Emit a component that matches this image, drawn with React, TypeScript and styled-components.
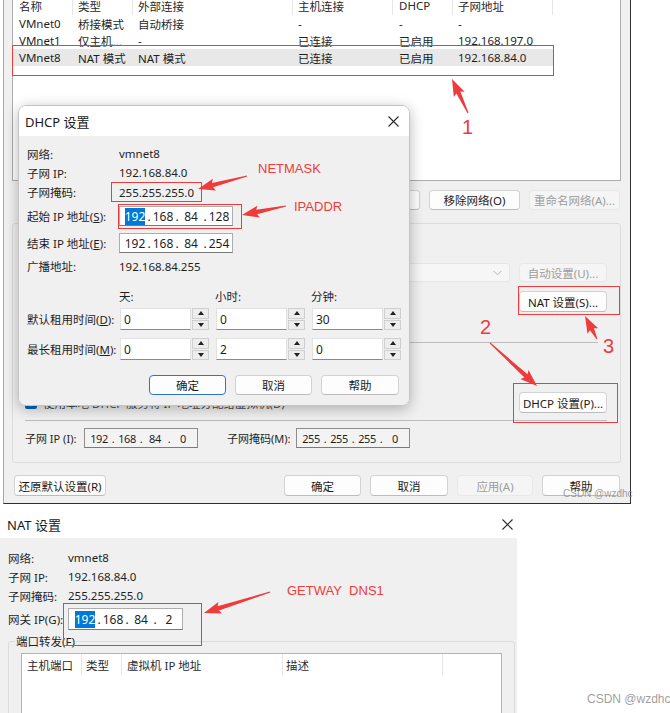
import React from "react";
import styled, { createGlobalStyle } from "styled-components";

const UI_FONT = `"Noto Sans", "Noto Sans CJK SC", sans-serif`;
const RED = "#ee3b3b";

const GlobalStyle = createGlobalStyle`
  * { box-sizing: border-box; }
  html, body { margin: 0; padding: 0; background: #fff; }
  body { font-family: ${UI_FONT}; font-size: 11.5px; color: #1f1f1f; }
`;

const Page = styled.div`
  position: relative;
  width: 670px;
  height: 713px;
  overflow: hidden;
  background: #fff;
`;

/* ---------- shared controls ---------- */

const Btn = styled.button<{ $w: number; $disabled?: boolean; $default?: boolean }>`
  flex: none;
  width: ${(p) => p.$w}px;
  height: 100%;
  padding: 0;
  display: flex;
  align-items: center;
  justify-content: center;
  font: inherit;
  background: ${(p) => (p.$disabled ? "#f5f5f5" : "#fdfdfd")};
  border: 1px solid ${(p) => (p.$default ? "#2f74c9" : p.$disabled ? "#e8e8e8" : "#d3d3d3")};
  border-bottom-color: ${(p) => (p.$default ? "#2f74c9" : p.$disabled ? "#e8e8e8" : "#bcbcbc")};
  border-radius: 4px;
  color: ${(p) => (p.$disabled ? "#9d9d9d" : "#1b1b1b")};
  white-space: nowrap;
`;

const IpBox = styled.div<{ $w: number; $pad: number; $muted?: boolean }>`
  flex: none;
  display: flex;
  align-items: center;
  width: ${(p) => p.$w}px;
  height: 100%;
  padding-left: ${(p) => p.$pad}px;
  background: ${(p) => (p.$muted ? "#f3f3f3" : "#fff")};
  border: 1px solid ${(p) => (p.$muted ? "#8c8c8c" : "#adadad")};
  border-bottom-color: #7a7a7a;
  font-size: ${(p) => (p.$muted ? "11px" : "12px")};
  letter-spacing: ${(p) => (p.$muted ? "-0.4px" : "0")};
`;

const IpPart = styled.span`
  width: 22px;
  text-align: center;
`;

const IpDot = styled.span`
  width: 6px;
  text-align: center;
`;

const Sel = styled.span`
  background: #0078d7;
  color: #fff;
`;

const IpField = ({ parts, w, pad, muted, selFirst }: { parts: string[]; w: number; pad: number; muted?: boolean; selFirst?: boolean }) => (
  <IpBox $w={w} $pad={pad} $muted={muted}>
    {parts.map((p, i) => (
      <React.Fragment key={i}>
        {i > 0 && <IpDot>.</IpDot>}
        <IpPart>{i === 0 && selFirst ? <Sel>{p}</Sel> : p}</IpPart>
      </React.Fragment>
    ))}
  </IpBox>
);

const CloseIcon = () => (
  <svg width="11" height="11" viewBox="0 0 11 11">
    <path d="M0.5 0.5 L10.5 10.5 M10.5 0.5 L0.5 10.5" stroke="#2b2b2b" strokeWidth="1.1" />
  </svg>
);

/* ---------- top: virtual network editor ---------- */

const EditorWindow = styled.div`
  position: relative;
  display: flex;
  flex-direction: column;
  width: 628px;
  height: 504px;
  margin-left: 3px;
  padding: 0 9px 0 8px;
  background: #f0f0f0;
  border-left: 1px solid #a8a8a8;
  border-right: 1px solid #303030;
  border-bottom: 1px solid #303030;
`;

const NetList = styled.div`
  flex: none;
  margin-top: -4px;
  height: 185px;
  background: #fff;
  border: 1px solid #acacac;
  border-top: none;
`;

const ListHead = styled.div<{ $h: number }>`
  display: flex;
  height: ${(p) => p.$h}px;
  color: #2a2a2a;
`;

const HeadCell = styled.div<{ $w: number; $pl: number }>`
  flex: none;
  display: flex;
  align-items: center;
  width: ${(p) => p.$w}px;
  padding-left: ${(p) => p.$pl}px;
  border-right: 1px solid #e6e6e6;
  white-space: nowrap;
`;

const ListRow = styled.div<{ $selected?: boolean }>`
  display: flex;
  width: 540px;
  height: 17px;
  align-items: center;
  background: ${(p) => (p.$selected ? "#e8e8e8" : "transparent")};
`;

const Cell = styled.div<{ $w: number; $pl: number }>`
  flex: none;
  width: ${(p) => p.$w}px;
  padding-left: ${(p) => p.$pl}px;
  white-space: nowrap;
  overflow: hidden;
`;

const ButtonRow = styled.div<{ $mt: number; $h: number; $pl?: number; $pr?: number }>`
  flex: none;
  display: flex;
  align-items: center;
  gap: 9px;
  height: ${(p) => p.$h}px;
  margin-top: ${(p) => p.$mt}px;
  padding: 0 ${(p) => p.$pr ?? 0}px 0 ${(p) => p.$pl ?? 0}px;
`;

const Spacer = styled.div`
  flex: 1;
`;

const InfoGroup = styled.div`
  flex: none;
  display: flex;
  flex-direction: column;
  height: 240px;
  margin-top: 13px;
  padding: 0 13px 0 12px;
  border: 1px solid #dcdcdc;
  border-radius: 3px;
`;

const GroupRow = styled.div<{ $mt: number; $h: number }>`
  flex: none;
  display: flex;
  align-items: center;
  height: ${(p) => p.$h}px;
  margin-top: ${(p) => p.$mt}px;
`;

const Rule = styled.div<{ $mt: number; $mr: number }>`
  flex: none;
  height: 1px;
  margin-top: ${(p) => p.$mt}px;
  margin-right: ${(p) => p.$mr}px;
  background: #bdbdbd;
`;

const Combo = styled.div`
  flex: 1;
  height: 100%;
  margin: 0 9px 0 8px;
  display: flex;
  align-items: center;
  justify-content: flex-end;
  padding-right: 7px;
  background: #f6f6f6;
  border: 1px solid #e6e6e6;
  border-radius: 3px;
`;

const Check = styled.span`
  flex: none;
  width: 12px;
  height: 12px;
  margin-right: 6px;
  border-radius: 2px;
  background: #0067c0;
  display: flex;
  align-items: center;
  justify-content: center;
`;

const MutedText = styled.span`
  color: #4a4a4a;
  white-space: nowrap;
`;

const RowLabel = styled.span<{ $w: number; $ml?: number }>`
  flex: none;
  width: ${(p) => p.$w}px;
  margin-left: ${(p) => p.$ml ?? 0}px;
  white-space: nowrap;
  font-size: 11px;
`;

const Watermark = styled.span<{ $size: number }>`
  position: absolute;
  font-family: "Liberation Sans", sans-serif;
  font-size: ${(p) => p.$size}px;
  color: rgba(140, 140, 140, 0.85);
  white-space: nowrap;
  line-height: 1;
`;

const cols = [
  { w: 60, pl: 6 },
  { w: 60, pl: 5 },
  { w: 160, pl: 5 },
  { w: 100, pl: 5 },
  { w: 60, pl: 6 },
  { w: 100, pl: 5 },
];

const heads = ["名称", "类型", "外部连接", "主机连接", "DHCP", "子网地址"];
const nets = [
  ["VMnet0", "桥接模式", "自动桥接", "-", "-", "-"],
  ["VMnet1", "仅主机...", "-", "已连接", "已启用", "192.168.197.0"],
  ["VMnet8", "NAT 模式", "NAT 模式", "已连接", "已启用", "192.168.84.0"],
];

const NetworkEditor = () => (
  <EditorWindow>
    <NetList>
      <ListHead $h={19}>
        {heads.map((h, i) => (
          <HeadCell key={h} $w={cols[i].w} $pl={cols[i].pl}>
            {h}
          </HeadCell>
        ))}
      </ListHead>
      {nets.map((row, r) => (
        <ListRow key={row[0]} $selected={r === 2}>
          {row.map((c, i) => (
            <Cell key={i} $w={cols[i].w} $pl={cols[i].pl}>
              {c}
            </Cell>
          ))}
        </ListRow>
      ))}
    </NetList>

    <ButtonRow $mt={9} $h={20} $pr={1}>
      <Spacer />
      <Btn $w={91}>添加网络(E)...</Btn>
      <Btn $w={91}>移除网络(O)</Btn>
      <Btn $w={91} $disabled>
        重命名网络(A)...
      </Btn>
    </ButtonRow>

    <InfoGroup>
      <GroupRow $mt={39} $h={19}>
        <MutedText>已桥接至(G):</MutedText>
        <Combo>
          <svg width="9" height="6" viewBox="0 0 9 6">
            <path d="M0.5 0.8 L4.5 4.8 L8.5 0.8" fill="none" stroke="#b5b5b5" strokeWidth="1" />
          </svg>
        </Combo>
        <Btn $w={88} $disabled>
          自动设置(U)...
        </Btn>
      </GroupRow>
      <GroupRow $mt={9} $h={21}>
        <Spacer />
        <Btn $w={88}>NAT 设置(S)...</Btn>
      </GroupRow>
      <Rule $mt={30} $mr={9} />
      <GroupRow $mt={49} $h={21}>
        <Check>
          <svg width="9" height="8" viewBox="0 0 9 8">
            <path d="M1 4 L3.5 6.5 L8 1.2" fill="none" stroke="#fff" strokeWidth="1.4" />
          </svg>
        </Check>
        <MutedText>使用本地 DHCP 服务将 IP 地址分配给虚拟机(D)</MutedText>
        <Spacer />
        <Btn $w={88}>DHCP 设置(P)...</Btn>
      </GroupRow>
      <Rule $mt={7} $mr={0} />
      <GroupRow $mt={7} $h={20}>
        <RowLabel $w={59}>子网 IP (I):</RowLabel>
        <IpField parts={["192", "168", "84", "0"]} w={114} pad={3} muted />
        <RowLabel $w={69} $ml={29}>
          子网掩码(M):
        </RowLabel>
        <IpField parts={["255", "255", "255", "0"]} w={114} pad={3} muted />
      </GroupRow>
    </InfoGroup>

    <ButtonRow $mt={12} $h={21} $pl={2} $pr={1}>
      <Btn $w={92}>还原默认设置(R)</Btn>
      <Spacer />
      <Btn $w={77}>确定</Btn>
      <Btn $w={78}>取消</Btn>
      <Btn $w={76} $disabled>
        应用(A)
      </Btn>
      <Btn $w={78}>帮助</Btn>
    </ButtonRow>

    <Watermark $size={10} style={{ left: 559, top: 489 }}>
      CSDN @wzdhc
    </Watermark>
  </EditorWindow>
);

/* ---------- DHCP dialog (floating over the editor) ---------- */

const DhcpDialog = styled.div`
  position: absolute;
  left: 18px;
  top: 105px;
  width: 392px;
  display: flex;
  flex-direction: column;
  border: 1px solid #c4c4c4;
  border-radius: 8px;
  overflow: hidden;
  box-shadow: 0 3px 14px rgba(0, 0, 0, 0.28);
`;

const TitleBar = styled.div<{ $h: number; $pl: number; $pr: number }>`
  flex: none;
  display: flex;
  align-items: center;
  justify-content: space-between;
  height: ${(p) => p.$h}px;
  padding: 0 ${(p) => p.$pr}px 0 ${(p) => p.$pl}px;
  background: #fff;
  font-size: 13px;
  color: #1a1a1a;
`;

const DialogBody = styled.div`
  display: flex;
  flex-direction: column;
  padding: 8px 10px 10px 8px;
  background: #f0f0f0;
`;

const Field = styled.div<{ $h: number; $mt?: number; $labelW: number }>`
  flex: none;
  display: grid;
  grid-template-columns: ${(p) => p.$labelW}px 1fr;
  align-items: center;
  height: ${(p) => p.$h}px;
  margin-top: ${(p) => p.$mt ?? 0}px;
  white-space: nowrap;
`;

const LeaseGrid = styled.div<{ $h: number; $mt: number }>`
  flex: none;
  display: grid;
  grid-template-columns: 92px 96px 96px 96px;
  align-items: center;
  height: ${(p) => p.$h}px;
  margin-top: ${(p) => p.$mt}px;
  white-space: nowrap;
`;

const SpinBox = styled.div`
  display: flex;
  width: 89px;
  height: 100%;
  margin-left: 1px;
`;

const SpinInput = styled.div`
  flex: 1;
  padding: 2px 0 0 3px;
  background: #fff;
  border: 1px solid #e2e2e2;
  border-bottom-color: #8a8a8a;
  font-size: 12px;
`;

const SpinBtns = styled.div`
  flex: none;
  display: flex;
  flex-direction: column;
  gap: 1px;
  width: 17px;
  margin-left: 1px;
`;

const SpinBtn = styled.div<{ $down?: boolean }>`
  flex: 1;
  display: flex;
  align-items: center;
  justify-content: center;
  background: #ededed;
  border: 1px solid #cfcfcf;
  &::after {
    content: "";
    border-left: 3px solid transparent;
    border-right: 3px solid transparent;
    ${(p) => (p.$down ? "border-top: 4px solid #222;" : "border-bottom: 4px solid #222;")}
  }
`;

const Spinner = ({ value }: { value: string }) => (
  <SpinBox>
    <SpinInput>{value}</SpinInput>
    <SpinBtns>
      <SpinBtn />
      <SpinBtn $down />
    </SpinBtns>
  </SpinBox>
);

const Key = styled.span`
  text-decoration: underline;
`;

const DhcpSettings = () => (
  <DhcpDialog>
    <TitleBar $h={30} $pl={6} $pr={10}>
      <span>DHCP 设置</span>
      <CloseIcon />
    </TitleBar>
    <DialogBody>
      <Field $h={19} $labelW={92}>
        <span>网络:</span>
        <span>vmnet8</span>
      </Field>
      <Field $h={19} $labelW={92}>
        <span>子网 IP:</span>
        <span>192.168.84.0</span>
      </Field>
      <Field $h={20} $labelW={92}>
        <span>子网掩码:</span>
        <span>255.255.255.0</span>
      </Field>
      <Field $h={20} $mt={4} $labelW={92}>
        <span>
          起始 IP 地址(<Key>S</Key>):
        </span>
        <IpField parts={["192", "168", "84", "128"]} w={114} pad={4} selFirst />
      </Field>
      <Field $h={20} $mt={7} $labelW={92}>
        <span>
          结束 IP 地址(<Key>E</Key>):
        </span>
        <IpField parts={["192", "168", "84", "254"]} w={114} pad={4} />
      </Field>
      <Field $h={18} $mt={4} $labelW={92}>
        <span>广播地址:</span>
        <span>192.168.84.255</span>
      </Field>
      <LeaseGrid $h={16} $mt={13}>
        <span />
        <span>天:</span>
        <span>小时:</span>
        <span>分钟:</span>
      </LeaseGrid>
      <LeaseGrid $h={22} $mt={4}>
        <span>
          默认租用时间(<Key>D</Key>):
        </span>
        <Spinner value="0" />
        <Spinner value="0" />
        <Spinner value="30" />
      </LeaseGrid>
      <LeaseGrid $h={22} $mt={8}>
        <span>
          最长租用时间(<Key>M</Key>):
        </span>
        <Spinner value="0" />
        <Spinner value="2" />
        <Spinner value="0" />
      </LeaseGrid>
      <ButtonRow $mt={15} $h={20}>
        <Spacer />
        <Btn $w={77} $default>
          确定
        </Btn>
        <Btn $w={77}>取消</Btn>
        <Btn $w={78}>帮助</Btn>
      </ButtonRow>
    </DialogBody>
  </DhcpDialog>
);

/* ---------- bottom: NAT settings ---------- */

const NatWindow = styled.div`
  display: flex;
  flex-direction: column;
  width: 517px;
  margin-top: 6px;
`;

const NatBody = styled.div`
  display: flex;
  flex-direction: column;
  height: 180px;
  padding: 10px 2px 0 8px;
  background: #f0f0f0;
`;

const PortGroup = styled.fieldset`
  flex: none;
  margin: 3px 0 0 0;
  padding: 0 0 0 6px;
  height: 200px;
  border: 1px solid #dcdcdc;
  border-radius: 3px;
  legend {
    padding: 0 1px;
    font-size: 11.5px;
  }
`;

const PortList = styled.div`
  margin: 4px 0 0 6px;
  width: 481px;
  height: 120px;
  background: #fff;
  border: 1px solid #b4b4b4;
`;

const portCols = [
  { w: 60, pl: 5, t: "主机端口" },
  { w: 40, pl: 4, t: "类型" },
  { w: 161, pl: 5, t: "虚拟机 IP 地址" },
  { w: 160, pl: 3, t: "描述" },
];

const NatSettings = () => (
  <NatWindow>
    <TitleBar $h={28} $pl={7} $pr={4}>
      <span>NAT 设置</span>
      <CloseIcon />
    </TitleBar>
    <NatBody>
      <Field $h={19} $labelW={60}>
        <span>网络:</span>
        <span>vmnet8</span>
      </Field>
      <Field $h={19} $labelW={60}>
        <span>子网 IP:</span>
        <span>192.168.84.0</span>
      </Field>
      <Field $h={19} $labelW={60}>
        <span>子网掩码:</span>
        <span>255.255.255.0</span>
      </Field>
      <Field $h={22} $mt={3} $labelW={60}>
        <span>网关 IP(G):</span>
        <IpField parts={["192", "168", "84", "2"]} w={115} pad={5} selFirst />
      </Field>
      <PortGroup>
        <legend>端口转发(F)</legend>
        <PortList>
          <ListHead $h={21}>
            {portCols.map((c) => (
              <HeadCell key={c.t} $w={c.w} $pl={c.pl}>
                {c.t}
              </HeadCell>
            ))}
          </ListHead>
        </PortList>
      </PortGroup>
    </NatBody>
  </NatWindow>
);

/* ---------- red annotations ---------- */

const Overlay = styled.svg`
  position: absolute;
  left: 0;
  top: 0;
  pointer-events: none;
`;

const Note = styled.span<{ $size: number }>`
  position: absolute;
  transform: translateY(-50%);
  font-family: "Liberation Sans", sans-serif;
  font-size: ${(p) => p.$size}px;
  line-height: 1;
  color: ${RED};
  white-space: nowrap;
`;

function arrow(x1: number, y1: number, x2: number, y2: number, head = 15, headW = 12, neckW = 4.5) {
  const dx = x2 - x1;
  const dy = y2 - y1;
  const len = Math.hypot(dx, dy);
  const ux = dx / len;
  const uy = dy / len;
  const px = -uy;
  const py = ux;
  const bx = x2 - ux * head;
  const by = y2 - uy * head;
  const p = (x: number, y: number) => `${x.toFixed(1)},${y.toFixed(1)}`;
  return [
    p(x1 + px * 0.5, y1 + py * 0.5),
    p(bx + (px * neckW) / 2, by + (py * neckW) / 2),
    p(bx + (px * headW) / 2 - ux * 2, by + (py * headW) / 2 - uy * 2),
    p(x2, y2),
    p(bx - (px * headW) / 2 - ux * 2, by - (py * headW) / 2 - uy * 2),
    p(bx - (px * neckW) / 2, by - (py * neckW) / 2),
    p(x1 - px * 0.5, y1 - py * 0.5),
  ].join(" ");
}

const boxes = [
  [12, 45, 553, 75],
  [111, 182, 201, 201],
  [118, 204, 241, 228],
  [518, 286, 619, 314],
  [513, 383, 617, 422],
  [63, 603, 201, 645],
];

const arrows: [number, number, number, number][] = [
  [468, 113, 452, 79],
  [247, 176, 198, 189],
  [286, 206, 242, 215],
  [490, 343, 537, 386],
  [597, 339, 585, 316],
  [270, 592, 204, 613],
];

const Annotations = () => (
  <>
    <Overlay width={670} height={713}>
      {boxes.map(([x1, y1, x2, y2], i) => (
        <rect key={i} x={x1 + 0.5} y={y1 + 0.5} width={x2 - x1} height={y2 - y1} fill="none" stroke={RED} strokeWidth="1" />
      ))}
      {arrows.map((a, i) => (
        <polygon key={i} points={arrow(...a)} fill={RED} />
      ))}
    </Overlay>
    <Note $size={13} style={{ left: 258, top: 168 }}>
      NETMASK
    </Note>
    <Note $size={13} style={{ left: 294, top: 206 }}>
      IPADDR
    </Note>
    <Note $size={13} style={{ left: 287, top: 590 }}>
      GETWAY&nbsp;&nbsp;DNS1
    </Note>
    <Note $size={20} style={{ left: 462, top: 127 }}>
      1
    </Note>
    <Note $size={20} style={{ left: 480, top: 327 }}>
      2
    </Note>
    <Note $size={20} style={{ left: 603, top: 346 }}>
      3
    </Note>
  </>
);

export default function App() {
  return (
    <Page>
      <GlobalStyle />
      <NetworkEditor />
      <NatSettings />
      <DhcpSettings />
      <Annotations />
      <Watermark $size={12} style={{ left: 587, top: 693 }}>
        CSDN @wzdhc
      </Watermark>
    </Page>
  );
}
